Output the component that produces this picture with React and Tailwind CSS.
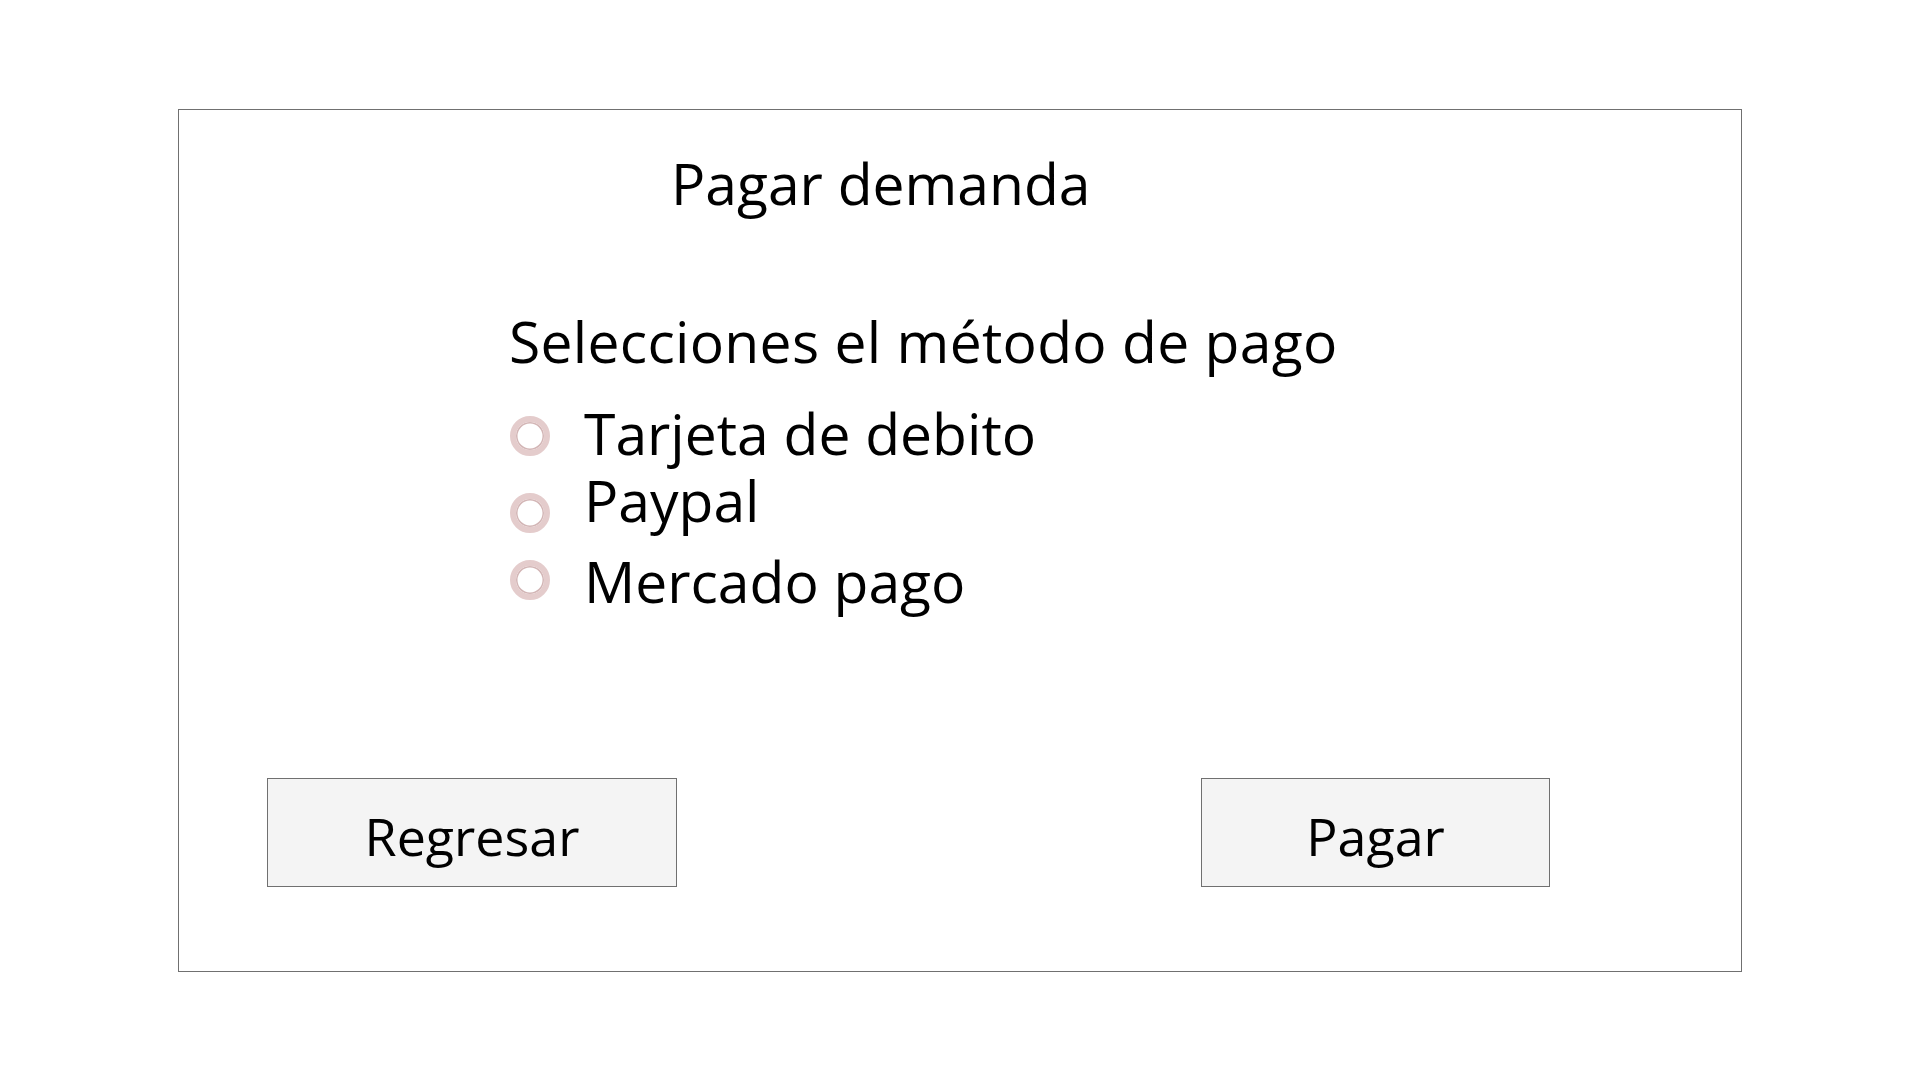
import React from 'react'

const methods = [
  { label: 'Tarjeta de debito', rowGap: 'mt-[35px]', dot: 'mt-[11px]' },
  { label: 'Paypal', rowGap: 'mt-[10px]', dot: 'mt-[21px]' },
  { label: 'Mercado pago', rowGap: 'mt-[20px]', dot: 'mt-[7px]' },
]

const Radio = ({ className = '' }) => (
  <div
    className={`h-[40px] w-[40px] shrink-0 rounded-full border-[6px] border-[#e4cccc] bg-white shadow-[inset_0_0_0_1.5px_#d3b6b6] ${className}`}
  />
)

export default function App() {
  const [selected, setSelected] = React.useState(null)

  return (
    <div className='min-h-screen w-full bg-white pt-[109px] pl-[178px] font-["Open_Sans",sans-serif] text-black'>
      <div className='flex h-[863px] w-[1564px] flex-col border border-[#707070]'>
        <h1 className='ml-[492px] mt-[45px] text-[57px] font-normal leading-none'>Pagar demanda</h1>

        <p className='ml-[330px] mt-[101px] text-[57px] leading-none tracking-[0.3px]'>Selecciones el método de pago</p>

        {methods.map((m) => (
          <div
            key={m.label}
            className={`ml-[331px] flex items-start gap-[34px] cursor-pointer ${m.rowGap}`}
            onClick={() => setSelected(m.label)}
          >
            <Radio className={m.dot} />
            <span className='text-[57px] leading-none'>{m.label}</span>
          </div>
        ))}

        <div className='ml-[88px] mt-[168px] flex gap-[524px]'>
          <button
            type='button'
            className='flex h-[109px] w-[410px] items-center justify-center border border-[#707070] bg-[#f4f4f4] pt-[6px] text-[52px] leading-none'
          >
            Regresar
          </button>
          <button
            type='button'
            className='flex h-[109px] w-[349px] items-center justify-center border border-[#707070] bg-[#f4f4f4] pt-[6px] text-[52px] leading-none'
          >
            Pagar
          </button>
        </div>
      </div>
    </div>
  )
}
